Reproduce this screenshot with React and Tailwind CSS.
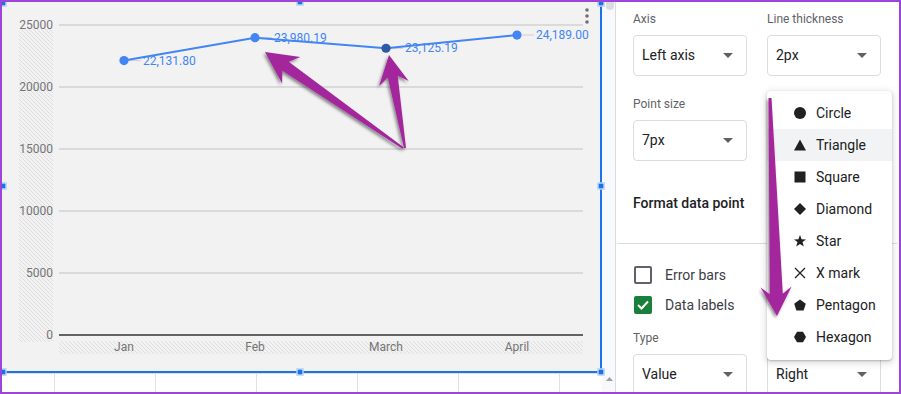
import React from 'react';

const points = [
  { m: 'Jan', x: 124, v: 22131.8, label: '22,131.80' },
  { m: 'Feb', x: 255, v: 23980.19, label: '23,980.19' },
  { m: 'March', x: 386, v: 23125.19, label: '23,125.19', active: true },
  { m: 'April', x: 517, v: 24189.0, label: '24,189.00' },
];

const yOf = (v) => 335 - v * 0.0124;

// arrow polygon from tail (bx,by) to tip (tx,ty)
const arrow = (tx, ty, bx, by, headLen = 30, half = 15, neck = 5.5, tail = 1.2) => {
  const len = Math.hypot(tx - bx, ty - by);
  const ux = (tx - bx) / len, uy = (ty - by) / len;
  const nx = -uy, ny = ux;
  const hx = tx - ux * headLen, hy = ty - uy * headLen;
  const jx = tx - ux * (headLen - 7), jy = ty - uy * (headLen - 7);
  const p = [
    [tx, ty],
    [hx + nx * half, hy + ny * half],
    [jx + nx * neck, jy + ny * neck],
    [bx + nx * tail, by + ny * tail],
    [bx - nx * tail, by - ny * tail],
    [jx - nx * neck, jy - ny * neck],
    [hx - nx * half, hy - ny * half],
  ];
  return p.map(([a, b]) => `${a.toFixed(1)},${b.toFixed(1)}`).join(' ');
};

const Caret = () => (
  <svg width="10" height="5" viewBox="0 0 10 5">
    <path d="M0 0 L10 0 L5 5z" fill="#5f6368" />
  </svg>
);

const Field = ({ label, value }) => (
  <div className="w-[114px]">
    <div className="h-4 text-[12px] leading-4 text-[#5f6368]">{label}</div>
    <div className="mt-2 h-[41px] border border-[#dadce0] rounded-[4px] flex items-center justify-between pl-2 pr-[13px] text-[14px] text-[#202124]">
      <span>{value}</span>
      <Caret />
    </div>
  </div>
);

const Handle = ({ className }) => (
  <div className={`absolute w-[7px] h-[7px] bg-[#1a73e8] border border-white -translate-x-1/2 -translate-y-1/2 ${className}`} />
);

const shapes = {
  Circle: <circle cx="7" cy="7" r="6" />,
  Triangle: <path d="M7 1.5 L13 12.5 L1 12.5z" />,
  Square: <rect x="1.5" y="1.5" width="11" height="11" />,
  Diamond: <path d="M7 1 L13 7 L7 13 L1 7z" />,
  Star: <path d="M7 1 L8.6 5.3 L13 5.4 L9.5 8.1 L10.8 12.5 L7 9.9 L3.2 12.5 L4.5 8.1 L1 5.4 L5.4 5.3z" />,
  'X mark': <path d="M2 2 L12 12 M12 2 L2 12" stroke="#202124" strokeWidth="1.3" fill="none" />,
  Pentagon: <path d="M7 1.5 L12.8 5.7 L10.6 12.5 L3.4 12.5 L1.2 5.7z" />,
  Hexagon: <path d="M1 7 L4 1.8 L10 1.8 L13 7 L10 12.2 L4 12.2z" />,
};

const Chart = () => (
  <svg width="598" height="369" viewBox="2 2 598 369" className="block">
    <defs>
      <pattern id="hatch" patternUnits="userSpaceOnUse" width="4" height="4">
        <path d="M-1,3 l2,2 M0,0 l4,4 M3,-1 l2,2" stroke="#dedede" strokeWidth="1" />
      </pattern>
    </defs>
    <rect x="19" y="29" width="34" height="313" fill="url(#hatch)" />
    <rect x="59" y="341" width="524" height="13" fill="url(#hatch)" />
    {[0, 5000, 10000, 15000, 20000, 25000].map((v) => (
      <g key={v}>
        <line x1="59" x2="583" y1={yOf(v)} y2={yOf(v)} stroke={v === 0 ? '#333333' : '#c2c2c2'} strokeWidth={v === 0 ? 1.5 : 1} />
        <text x="53" y={yOf(v) + 4} textAnchor="end" fontSize="12" fill="#757575" fontFamily="Roboto, sans-serif">{v}</text>
      </g>
    ))}
    {points.map((p) => (
      <text key={p.m} x={p.x} y="351" textAnchor="middle" fontSize="12" fill="#757575" fontFamily="Roboto, sans-serif">{p.m}</text>
    ))}
    {points.map((p) => (
      <line key={p.m + 'l'} x1={p.x + 5} x2={p.x + 17} y1={yOf(p.v)} y2={yOf(p.v)} stroke="#cfcfcf" strokeWidth="1" />
    ))}
    <polyline points={points.map((p) => `${p.x},${yOf(p.v)}`).join(' ')} fill="none" stroke="#4285f4" strokeWidth="2" />
    {points.map((p) => (
      <g key={p.m + 'p'}>
        <circle cx={p.x} cy={yOf(p.v)} r="4.6" fill={p.active ? '#2d5aa8' : '#4285f4'} />
        <text x={p.x + 19} y={yOf(p.v) + 4} fontSize="12" fill="#4285f4" fontFamily="Roboto, sans-serif">{p.label}</text>
      </g>
    ))}
    <circle cx="587" cy="10" r="1.8" fill="#6f6f6f" />
    <circle cx="587" cy="16" r="1.8" fill="#6f6f6f" />
    <circle cx="587" cy="22" r="1.8" fill="#6f6f6f" />
  </svg>
);

export default function App() {
  return (
    <div className="w-[901px] h-[394px] border-2 border-[#9d44d9] relative overflow-hidden bg-white font-[Roboto,sans-serif] flex">
      {/* chart + sheet rows */}
      <div className="w-[600px] shrink-0 h-full flex flex-col">
        <div className="relative h-[371px] bg-[#f2f2f2] border-r-2 border-b-2 border-[#1a73e8]">
          <Chart />
          <Handle className="left-[1px] top-[1px]" />
          <Handle className="left-[298px] top-0" />
          <Handle className="left-[599px] top-[1px]" />
          <Handle className="left-[1px] top-[184px]" />
          <Handle className="left-[599px] top-[184px]" />
          <Handle className="left-[1px] top-[370px]" />
          <Handle className="left-[298px] top-[370px]" />
          <Handle className="left-[599px] top-[370px]" />
        </div>
        <div className="flex-1 flex overflow-hidden border-t border-[#e0e0e0]">
          <div className="w-[52px] shrink-0" />
          {[0, 1, 2, 3, 4, 5].map((i) => (
            <div key={i} className="w-[101px] shrink-0 border-l border-[#e0e0e0]" />
          ))}
        </div>
      </div>

      {/* scrollbar strip */}
      <div className="w-[13px] shrink-0 h-full bg-[#f8f9fa] flex flex-col justify-between items-end pr-px">
        <div className="w-[8px] h-[8px] rounded-b-full bg-[#dadce0]" />
        <svg width="7" height="4" viewBox="0 0 7 4" className="mb-[11px] mr-[1px]">
          <path d="M0 4 L7 4 L3.5 0z" fill="#9aa0a6" />
        </svg>
      </div>

      {/* side panel */}
      <div className="w-[284px] shrink-0 h-full border-l border-[#dadce0] bg-white relative pl-[17px] pt-[9px] text-[#202124]">
        <div className="flex gap-[20px]">
          <Field label="Axis" value="Left axis" />
          <Field label="Line thickness" value="2px" />
        </div>
        <div className="flex gap-[20px] mt-[20px]">
          <Field label="Point size" value="7px" />
          <Field label="" value="" />
        </div>
        <div className="mt-[32px] text-[14px] leading-5 font-medium">Format data point</div>
        <div className="mt-[30px] -ml-[16px] w-[280px] border-t border-[#dadce0]" />
        <div className="mt-[16px]">
          <div className="h-[30px] flex items-center gap-[13px] text-[14px] text-[#3c4043]">
            <div className="ml-px w-[18px] h-[18px] border-2 border-[#5f6368] rounded-[2px]" />
            <span>Error bars</span>
          </div>
          <div className="h-[30px] flex items-center gap-[13px] text-[14px] text-[#3c4043]">
            <div className="ml-px w-[18px] h-[18px] bg-[#188038] rounded-[2px] flex items-center justify-center">
              <svg width="12" height="10" viewBox="0 0 12 10">
                <path d="M1 5 L4.5 8.5 L11 1.5" stroke="white" strokeWidth="2" fill="none" />
              </svg>
            </div>
            <span>Data labels</span>
          </div>
        </div>
        <div className="flex gap-[20px] mt-[10px]">
          <Field label="Type" value="Value" />
          <Field label="" value="Right" />
        </div>

        {/* shape menu */}
        <div className="absolute left-[151px] top-[89px] w-[125px] bg-white rounded-[4px] pt-[6px] pb-[7px] shadow-[0_1px_2px_rgba(60,64,67,0.3),0_2px_6px_2px_rgba(60,64,67,0.15)]">
          {Object.keys(shapes).map((name) => (
            <div key={name} className={`h-[32px] flex items-center pl-[26px] gap-[9px] text-[14px] text-[#202124] ${name === 'Triangle' ? 'bg-[#f1f3f4]' : ''}`}>
              <svg width="14" height="14" viewBox="0 0 14 14" fill="#202124">{shapes[name]}</svg>
              <span>{name}</span>
            </div>
          ))}
        </div>
      </div>

      {/* annotation arrows */}
      <svg width="897" height="390" viewBox="2 2 897 390" className="absolute inset-0 pointer-events-none">
        <defs>
          <filter id="sh" x="-20%" y="-20%" width="140%" height="140%">
            <feDropShadow dx="-1.5" dy="2" stdDeviation="1.5" floodColor="#000" floodOpacity="0.45" />
          </filter>
        </defs>
        <g fill="#a4279c" filter="url(#sh)">
          <polygon points={arrow(265, 52, 403, 148, 32, 16, 5.5, 1)} />
          <polygon points={arrow(389, 55, 405, 148, 29, 15, 5, 1)} />
          <polygon points={arrow(777, 316, 770, 98, 29, 15.5, 6.5, 1.5)} />
        </g>
      </svg>
    </div>
  );
}
